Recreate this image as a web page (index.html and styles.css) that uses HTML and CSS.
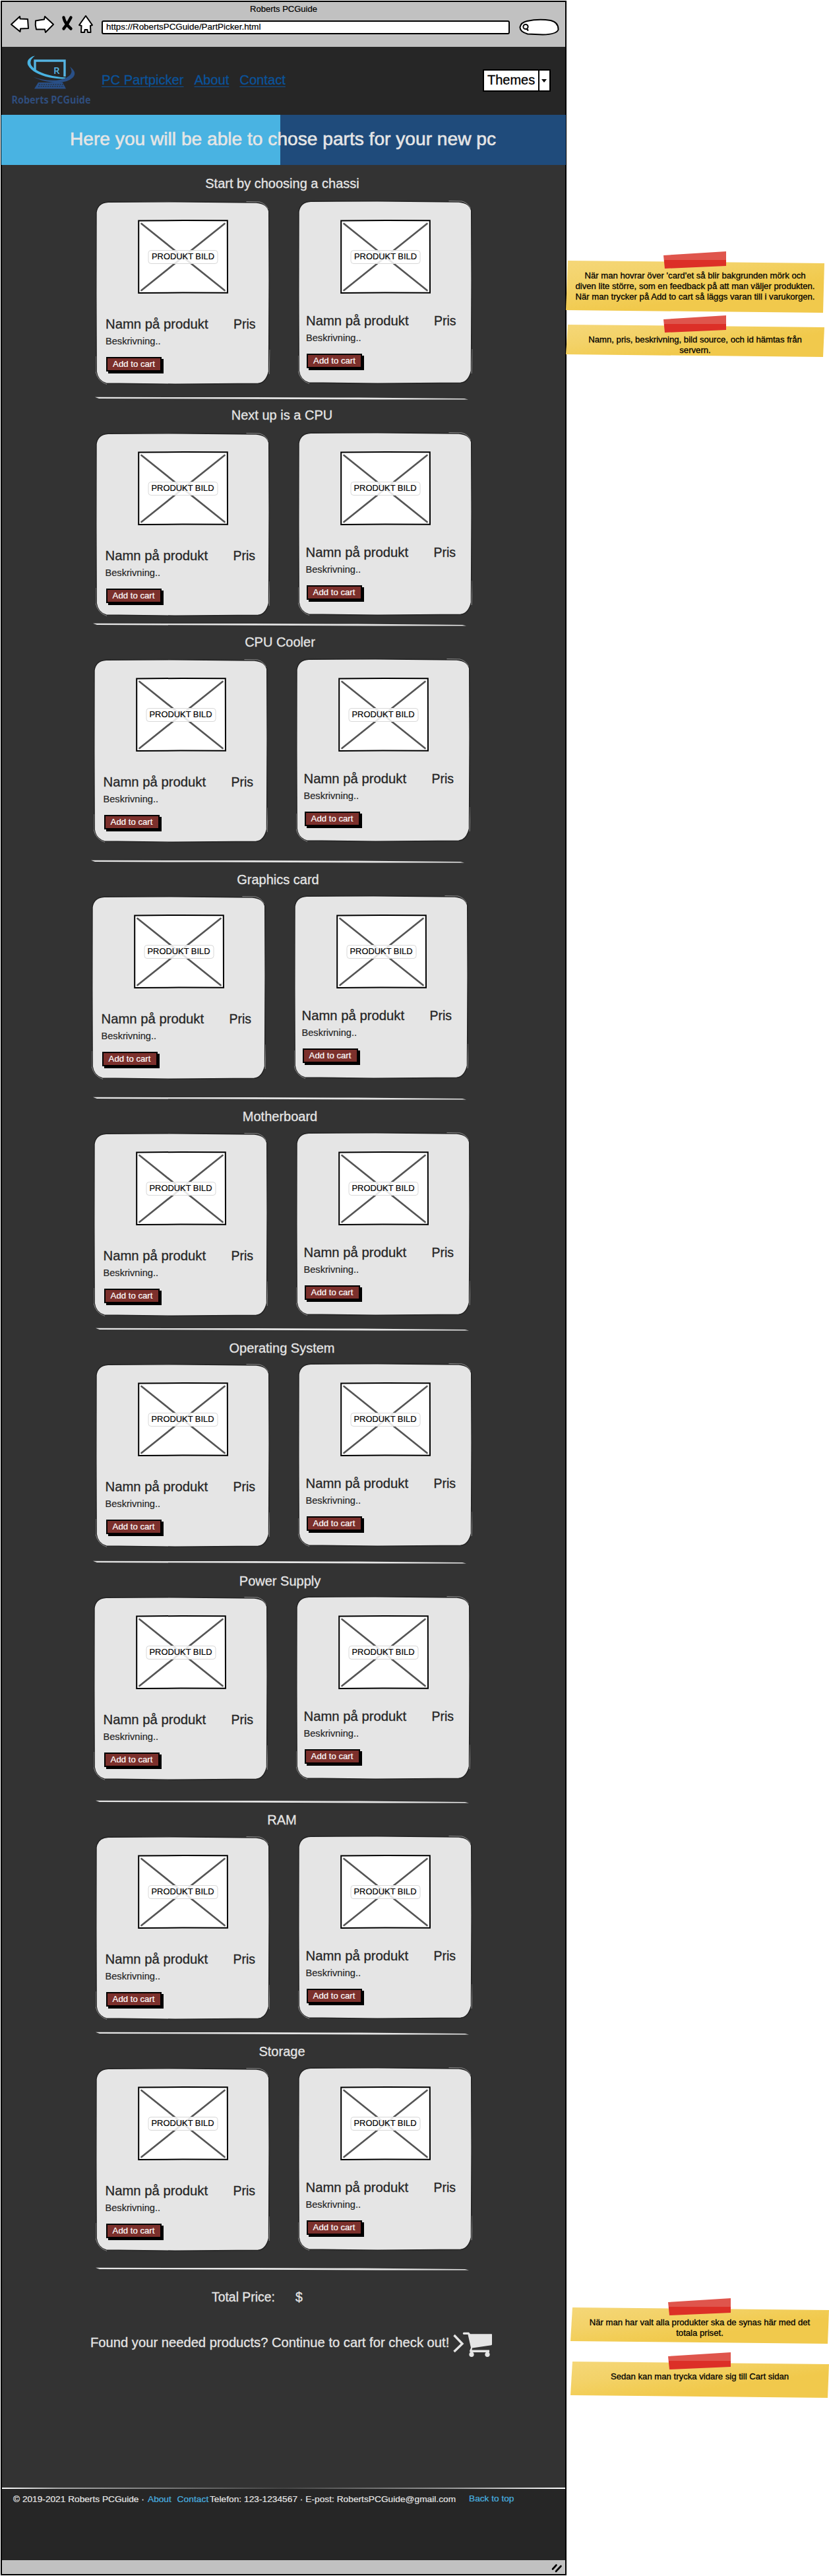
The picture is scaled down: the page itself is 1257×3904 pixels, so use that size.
FILE: index.html
```html
<!DOCTYPE html>
<html lang="sv">
<head>
<meta charset="utf-8">
<title>Roberts PCGuide</title>
<link rel="stylesheet" href="styles.css">
</head>
<body>
<svg class="defs" aria-hidden="true">
  <symbol id="card" viewBox="0 0 264 278" preserveAspectRatio="none">
    <path d="M1 17Q3 2 19 1.2L120 .8L243 2Q259 3 262.2 15L262.6 120L262 258Q258 275 246 276.3L120 277.2L16 276Q3 272 1.2 258L.8 140Z" fill="#e5e5e5" stroke="#222" stroke-width="1.4"/>
    <path d="M228 .6L248 1Q258 4 261 12M0 235V258Q3 273 17 277.4M263.6 225L262.6 262" fill="none" stroke="#b5b5b5" stroke-width=".7"/>
  </symbol>
  <symbol id="photo" viewBox="0 0 137 112">
    <path d="M1.2 1.4L70 1L135.8 1.2L136 110.8L68 110.6L1.2 111Z" fill="#fff" stroke="#000" stroke-width="2"/>
    <path d="M5.5 6L131.5 107M131.5 6L5.5 107" stroke="#555" stroke-width="2.7" stroke-linecap="round"/>
    <rect x="16" y="46.5" width="105" height="20" rx="4" fill="#fff" fill-opacity=".86" stroke="#d8d8d8"/>
  </symbol>
  <symbol id="rule" viewBox="0 0 566 6">
    <path d="M0 .8L240 1L400 1.6L560 3L566 4.6L430 4.4L180 3.6L6 3Z" fill="#e5e5e5"/>
  </symbol>
</svg>
<div class="board">
  <div class="window">
    <div class="chrome">
      <div class="chrome-title">Roberts PCGuide</div>
      <div class="chrome-bar">
        <svg class="chrome-icons" width="128" height="30" viewBox="0 0 128 30" fill="#fff" stroke="#000" stroke-width="2" stroke-linejoin="round">
          <path d="M2 15L15 3L15.5 6.5L27 7L28 21L16 21.500L15.500 26Z"/>
          <path d="M39 9.500Q47 8 52 7.500L53 3L66 15L54 27L53 22.500L40 22.500Q38 16 39 9.500Z"/>
          <path d="M81.500 4.500Q83 13 92.500 21.500M92.500 4.500Q88 14 81.500 21.500" fill="none" stroke-width="4.400" stroke-linecap="round"/>
          <path d="M115 2L125 16L122 17L122.500 27L118 27L117.500 23L113.500 23L113 27L108 27L108.500 17L105 16Z"/>
        </svg>
        <div class="address">https://RobertsPCGuide/PartPicker.html</div>
        <svg class="search" width="61" height="26" viewBox="0 0 61 26" fill="none" stroke="#000">
          <path d="M12 4Q30 0 48 3Q60 6 59.500 17Q57 24 36 24.500L13 23.500Q1 20 1.500 13Q3 6 12 4Z" fill="#fff" stroke-width="2"/>
          <circle cx="10" cy="12.500" r="3.600" stroke-width="2"/>
          <path d="M11.500 15.500L14 18.500" stroke-width="2.200"/>
        </svg>
      </div>
    </div>
    <header class="header">
      <svg class="logo" width="130" height="86" viewBox="0 0 130 86">
        <path d="M40 24V8H85V32" fill="none" stroke="#55b3e0" stroke-width="3.400"/>
        <path d="M40 .5Q26 11 41 21.500Q57 31.500 87 33.500Q86 35.500 80 35.500Q53 34 38 24Q22 12 33 3.500Q36 1 40 .5Z" fill="#49b3e2"/>
        <path d="M93 17Q105 26 97 34Q84 45 58 39.500Q46 37 37 32.500Q57 40 78 37Q102 31 93 17Z" fill="#294f86"/>
        <path d="M45 41H82L87 50.500H39Z" fill="#294f86"/>
        <path d="M46 44H83M45 47H84" stroke="#262626" stroke-width="1" stroke-dasharray="2 1.500"/>
        <text x="68" y="28" class="logo-r">R</text>
        <text x="4.500" y="73" class="logo-name" textLength="120" lengthAdjust="spacingAndGlyphs">Roberts PCGuide</text>
      </svg>
      <nav class="nav"><a href="#">PC Partpicker</a><a href="#">About</a><a href="#">Contact</a></nav>
      <div class="themes"><span>Themes</span><i></i></div>
    </header>
    <h1 class="banner">Here you will be able to chose parts for your new pc</h1>
    <main class="main">
      <section class="part chassi">
        <h2>Start by choosing a chassi</h2>
        <div class="cards">
          <article class="card"><svg class="card-bg"><use href="#card"/></svg><div class="photo"><svg><use href="#photo"/></svg><span>PRODUKT BILD</span></div><div class="name"><b>Namn på produkt</b><b>Pris</b></div><p>Beskrivning..</p><button>Add to cart</button></article>
          <article class="card"><svg class="card-bg"><use href="#card"/></svg><div class="photo"><svg><use href="#photo"/></svg><span>PRODUKT BILD</span></div><div class="name"><b>Namn på produkt</b><b>Pris</b></div><p>Beskrivning..</p><button>Add to cart</button></article>
        </div>
        <svg class="rule"><use href="#rule"/></svg>
      </section>
      <section class="part cpu">
        <h2>Next up is a CPU</h2>
        <div class="cards">
          <article class="card"><svg class="card-bg"><use href="#card"/></svg><div class="photo"><svg><use href="#photo"/></svg><span>PRODUKT BILD</span></div><div class="name"><b>Namn på produkt</b><b>Pris</b></div><p>Beskrivning..</p><button>Add to cart</button></article>
          <article class="card"><svg class="card-bg"><use href="#card"/></svg><div class="photo"><svg><use href="#photo"/></svg><span>PRODUKT BILD</span></div><div class="name"><b>Namn på produkt</b><b>Pris</b></div><p>Beskrivning..</p><button>Add to cart</button></article>
        </div>
        <svg class="rule"><use href="#rule"/></svg>
      </section>
      <section class="part cooler">
        <h2>CPU Cooler</h2>
        <div class="cards">
          <article class="card"><svg class="card-bg"><use href="#card"/></svg><div class="photo"><svg><use href="#photo"/></svg><span>PRODUKT BILD</span></div><div class="name"><b>Namn på produkt</b><b>Pris</b></div><p>Beskrivning..</p><button>Add to cart</button></article>
          <article class="card"><svg class="card-bg"><use href="#card"/></svg><div class="photo"><svg><use href="#photo"/></svg><span>PRODUKT BILD</span></div><div class="name"><b>Namn på produkt</b><b>Pris</b></div><p>Beskrivning..</p><button>Add to cart</button></article>
        </div>
        <svg class="rule"><use href="#rule"/></svg>
      </section>
      <section class="part graphics">
        <h2>Graphics card</h2>
        <div class="cards">
          <article class="card"><svg class="card-bg"><use href="#card"/></svg><div class="photo"><svg><use href="#photo"/></svg><span>PRODUKT BILD</span></div><div class="name"><b>Namn på produkt</b><b>Pris</b></div><p>Beskrivning..</p><button>Add to cart</button></article>
          <article class="card"><svg class="card-bg"><use href="#card"/></svg><div class="photo"><svg><use href="#photo"/></svg><span>PRODUKT BILD</span></div><div class="name"><b>Namn på produkt</b><b>Pris</b></div><p>Beskrivning..</p><button>Add to cart</button></article>
        </div>
        <svg class="rule"><use href="#rule"/></svg>
      </section>
      <section class="part motherboard">
        <h2>Motherboard</h2>
        <div class="cards">
          <article class="card"><svg class="card-bg"><use href="#card"/></svg><div class="photo"><svg><use href="#photo"/></svg><span>PRODUKT BILD</span></div><div class="name"><b>Namn på produkt</b><b>Pris</b></div><p>Beskrivning..</p><button>Add to cart</button></article>
          <article class="card"><svg class="card-bg"><use href="#card"/></svg><div class="photo"><svg><use href="#photo"/></svg><span>PRODUKT BILD</span></div><div class="name"><b>Namn på produkt</b><b>Pris</b></div><p>Beskrivning..</p><button>Add to cart</button></article>
        </div>
        <svg class="rule"><use href="#rule"/></svg>
      </section>
      <section class="part system">
        <h2>Operating System</h2>
        <div class="cards">
          <article class="card"><svg class="card-bg"><use href="#card"/></svg><div class="photo"><svg><use href="#photo"/></svg><span>PRODUKT BILD</span></div><div class="name"><b>Namn på produkt</b><b>Pris</b></div><p>Beskrivning..</p><button>Add to cart</button></article>
          <article class="card"><svg class="card-bg"><use href="#card"/></svg><div class="photo"><svg><use href="#photo"/></svg><span>PRODUKT BILD</span></div><div class="name"><b>Namn på produkt</b><b>Pris</b></div><p>Beskrivning..</p><button>Add to cart</button></article>
        </div>
        <svg class="rule"><use href="#rule"/></svg>
      </section>
      <section class="part power">
        <h2>Power Supply</h2>
        <div class="cards">
          <article class="card"><svg class="card-bg"><use href="#card"/></svg><div class="photo"><svg><use href="#photo"/></svg><span>PRODUKT BILD</span></div><div class="name"><b>Namn på produkt</b><b>Pris</b></div><p>Beskrivning..</p><button>Add to cart</button></article>
          <article class="card"><svg class="card-bg"><use href="#card"/></svg><div class="photo"><svg><use href="#photo"/></svg><span>PRODUKT BILD</span></div><div class="name"><b>Namn på produkt</b><b>Pris</b></div><p>Beskrivning..</p><button>Add to cart</button></article>
        </div>
        <svg class="rule"><use href="#rule"/></svg>
      </section>
      <section class="part ram">
        <h2>RAM</h2>
        <div class="cards">
          <article class="card"><svg class="card-bg"><use href="#card"/></svg><div class="photo"><svg><use href="#photo"/></svg><span>PRODUKT BILD</span></div><div class="name"><b>Namn på produkt</b><b>Pris</b></div><p>Beskrivning..</p><button>Add to cart</button></article>
          <article class="card"><svg class="card-bg"><use href="#card"/></svg><div class="photo"><svg><use href="#photo"/></svg><span>PRODUKT BILD</span></div><div class="name"><b>Namn på produkt</b><b>Pris</b></div><p>Beskrivning..</p><button>Add to cart</button></article>
        </div>
        <svg class="rule"><use href="#rule"/></svg>
      </section>
      <section class="part storage">
        <h2>Storage</h2>
        <div class="cards">
          <article class="card"><svg class="card-bg"><use href="#card"/></svg><div class="photo"><svg><use href="#photo"/></svg><span>PRODUKT BILD</span></div><div class="name"><b>Namn på produkt</b><b>Pris</b></div><p>Beskrivning..</p><button>Add to cart</button></article>
          <article class="card"><svg class="card-bg"><use href="#card"/></svg><div class="photo"><svg><use href="#photo"/></svg><span>PRODUKT BILD</span></div><div class="name"><b>Namn på produkt</b><b>Pris</b></div><p>Beskrivning..</p><button>Add to cart</button></article>
        </div>
        <svg class="rule"><use href="#rule"/></svg>
      </section>
      <div class="total"><span>Total Price:</span><span>$</span></div>
      <div class="checkout">
        <span>Found your needed products? Continue to cart for check out!</span>
        <svg width="62" height="40" viewBox="0 0 62 40">
          <path d="M2.500 5L15 18L2.500 30" fill="none" stroke="#e5e5e5" stroke-width="3.400"/>
          <path d="M17 .8H25L27 3.200H59.500Q60 3.200 60 4V19Q60 20 59 20.300L30 24.500L29.500 27.500H56V31H28Q26 31 26 29L28 24L23.500 4H17Q14.500 2.500 17 .8Z" fill="#e5e5e5"/>
          <ellipse cx="29" cy="34.300" rx="3.600" ry="3.800" fill="#e5e5e5"/><ellipse cx="53" cy="34.300" rx="3.600" ry="3.800" fill="#e5e5e5"/>
        </svg>
      </div>
    </main>
    <footer class="footer">
      <span class="copy">© 2019-2021 Roberts PCGuide ·</span><a class="f-about" href="#">About</a><a class="f-contact" href="#">Contact</a><span class="f-mail">Telefon: 123-1234567 · E-post: RobertsPCGuide@gmail.com</span><a class="f-top" href="#">Back to top</a>
    </footer>
    <div class="status">
      <svg width="20" height="16" viewBox="0 0 20 16" stroke="#000" stroke-width="2.600" stroke-linecap="round"><path d="M3 9.500L8.500 3.500M8 13L15.500 5"/></svg>
    </div>
  </div>
  <aside class="notes">
    <div class="note n1"><div class="paper">När man hovrar över 'card'et så blir bakgrunden mörk och<br>diven lite större, som en feedback på att man väljer produkten.<br>När man trycker på Add to cart så läggs varan till i varukorgen.</div><div class="tape"></div></div>
    <div class="note n2"><div class="paper">Namn, pris, beskrivning, bild source, och id hämtas från<br>servern.</div><div class="tape"></div></div>
    <div class="note n3"><div class="paper">När man har valt alla produkter ska de synas här med det<br>totala priset.</div><div class="tape"></div></div>
    <div class="note n4"><div class="paper">Sedan kan man trycka vidare sig till Cart sidan</div><div class="tape"></div></div>
  </aside>
</div>
</body>
</html>
```
FILE: styles.css
```css
* { box-sizing: border-box; }
body { margin: 0; background: #fff; font-family: "Liberation Sans", Arial, sans-serif; color: #262626; }
h1, h2, p { margin: 0; font-weight: 400; }
svg { display: block; }
.defs { position: absolute; width: 0; height: 0; }

.board { display: flex; align-items: flex-start; width: 1257px; height: 3904px; padding: 1px 0 0 1px; overflow: hidden; }
.window { flex: none; width: 858px; height: 3902px; border: 2px solid #000; background: #333; display: flex; flex-direction: column; }

/* Browser chrome */
.chrome { height: 68px; background: #c1c1c1; color: #000; }
.chrome-title { height: 22px; padding-top: 3px; text-align: center; font-size: 13px; line-height: 15px; -webkit-text-stroke: .2px #000; }
.chrome-bar { display: flex; align-items: flex-start; }
.chrome-icons { margin: -3px 0 0 12px; }
.address { margin: 6px 0 0 11px; width: 619px; height: 21px; border: 2px solid #000; border-radius: 3px; background: #fff; font-size: 13.35px; line-height: 16px; padding-left: 5px; -webkit-text-stroke: .2px #000; }
.search { margin: 3px 0 0 14px; }

/* Site header */
.header { height: 103px; background: #262626; display: flex; align-items: flex-start; }
.logo { margin: 13px 0 0 10px; overflow: visible; }
.logo-r { font: 600 15px "Open Sans", "Noto Sans", sans-serif; fill: #55b3e0; }
.logo-name { font: 700 15.500px "Open Sans", "Noto Sans", sans-serif; fill: #2f4d7d; }
.nav { display: flex; gap: 16px; margin: 38px 0 0 11px; font-size: 20.200px; line-height: 24px; }
.nav a { color: #0b539b; text-decoration: underline; text-underline-offset: 3px; text-decoration-thickness: 1px; -webkit-text-stroke: .3px #0b539b; }
.themes { margin: 34px 22px 0 auto; width: 103px; height: 34px; border: 2px solid #000; background: #fff; color: #000; display: flex; font-size: 20px; line-height: 28px; -webkit-text-stroke: .3px #000; }
.themes span { width: 84px; padding-left: 5px; border-right: 2px solid #000; }
.themes i { margin: 13px 0 0 3px; width: 8px; height: 5px; background: #000; clip-path: polygon(0 0, 100% 0, 50% 100%); }

.banner { margin: 0 -1px 0 -1px; height: 76px; background: linear-gradient(90deg, #49b3e2 423px, #1f4b7b 423px); color: #e5e5e5; font-size: 28.150px; line-height: 73px; padding-left: 104px; white-space: nowrap; -webkit-text-stroke: .6px #e5e5e5; }

/* Product sections; each one sets its own offsets */
.main { height: 3520px; }
.part { width: 570px; margin-left: calc(var(--left) - 3px); padding-top: var(--lead); }
.part h2 { width: 564px; text-align: center; font-size: 20px; line-height: 24px; color: #e5e5e5; margin-bottom: var(--gap); -webkit-text-stroke: .3px #e5e5e5; }
.cards { display: flex; gap: 45px; height: 276px; margin-bottom: var(--tail); }
.rule { width: 566px; height: 6px; margin-left: var(--rule); }
.chassi { --left: 146px; --lead: 16px; --gap: 16px; --tail: 19px; --rule: -2px; }
.cpu { --left: 145.5px; --lead: 10px; --gap: 16px; --tail: 11px; --rule: -5px; }
.cooler { --left: 142.5px; --lead: 11px; --gap: 15px; --tail: 27px; --rule: -5px; }
.graphics { --left: 139.5px; --lead: 12px; --gap: 14px; --tail: 27px; --rule: 1px; }
.motherboard { --left: 142.5px; --lead: 12px; --gap: 14px; --tail: 18px; --rule: 2px; }
.system { --left: 145.5px; --lead: 13px; --gap: 13px; --tail: 21px; --rule: -5px; }
.power { --left: 142.5px; --lead: 13px; --gap: 13px; --tail: 31px; --rule: 2px; }
.ram { --left: 145.5px; --lead: 12px; --gap: 14px; --tail: 19px; --rule: -1px; }
.storage { --left: 145.5px; --lead: 12px; --gap: 14px; --tail: 25px; --rule: -1px; }

.card { position: relative; width: 262px; height: 276px; padding: 27px 0 0 14px; }
.card-bg { position: absolute; left: -1px; top: -1px; width: 264.500px; height: 278px; z-index: 0; }
.card > :not(.card-bg) { position: relative; }
.photo { display: grid; place-items: center; width: 137px; height: 112px; margin-left: 49px; }
.photo svg, .photo span { grid-area: 1 / 1; }
.photo svg { width: 137px; height: 112px; }
.photo span { font-size: 12.900px; line-height: 16px; padding-bottom: 1px; color: #000; white-space: nowrap; -webkit-text-stroke: .2px #000; }
.name { display: flex; margin-top: 34px; font-size: 20.300px; line-height: 24px; }
.name b { font-weight: 400; width: 194px; white-space: nowrap; flex: none; -webkit-text-stroke: .3px #262626; }
.name b + b { width: 40px; font-size: 19.500px; }
.card p { margin: 5px 0 0 0; font-size: 14.600px; line-height: 18px; -webkit-text-stroke: .2px #262626; }
.card button { display: block; margin: 15px 0 0 1px; width: 84px; height: 22px; padding: 0; border: 2px solid #000; background: #7c302c; box-shadow: 3px 3px #000; color: #fff; font: 13.200px/18px "Liberation Sans", Arial, sans-serif; white-space: nowrap; -webkit-text-stroke: .2px #fff; }
.card + .card { margin-top: -1px; padding: 28px 0 0 11px; }
.card + .card .photo { margin-left: 52px; }
.card + .card .name { margin-top: 29px; }

.total { display: flex; margin: 27px 0 0 318px; font-size: 19.400px; line-height: 24px; color: #e5e5e5; -webkit-text-stroke: .3px #e5e5e5; }
.total span:first-child { width: 127px; }
.checkout { display: flex; margin: 41px 0 0 134px; font-size: 20.200px; line-height: 24px; color: #e5e5e5; }
.checkout span { flex: none; width: 549px; padding-top: 4px; white-space: nowrap; -webkit-text-stroke: .3px #e5e5e5; }

.footer { height: 110px; background: #262626; border-top: 2px solid; border-image: linear-gradient(90deg, #fff, #aaa 10%, #444 50%, #999 80%, #fff) 1; display: flex; padding: 7px 0 0 17px; font-size: 13.700px; line-height: 18px; color: #e5e5e5; white-space: nowrap; -webkit-text-stroke: .2px; }
.footer a { color: #49b3e2; text-decoration: none; }
.copy { width: 204px; }
.footer .f-about { width: 44.500px; }
.footer .f-contact { width: 49.500px; letter-spacing: .1px; }
.f-mail { width: 393px; letter-spacing: .03px; }
.f-top { margin-top: -1px; }
.status { flex: 1; background: #c1c1c1; display: flex; justify-content: flex-end; padding: 4px 2px 0 0; }

/* Sticky notes beside the window */
.notes { width: 398px; padding-top: 380px; }
.note { position: relative; width: 392px; padding-top: 14px; margin-left: -1px; }
.paper { height: 100%; padding-top: 15px; text-align: center; font-size: 13.150px; line-height: 15.800px; color: #000; white-space: nowrap; -webkit-text-stroke: .3px #000; background: linear-gradient(172deg, #f5d778 0, #f3d268 30%, #f2cd56 50%, #f1c94c 65%, #f1c94c); clip-path: polygon(3px 0, 100% 4px, calc(100% - 2px) 100%, 0 calc(100% - 4px)); }
.tape { position: absolute; left: 148px; top: 0; width: 95px; height: 26px; background: linear-gradient(#df554c 13px, #dc2f27 13px); clip-path: polygon(0 6px, 100% 0, 100% 22px, 2px 100%); }
.n1 { height: 93px; }
.n2 { height: 63px; margin-top: 4px; }
.n3 { height: 69px; margin: 2942px 0 0 6px; }
.n4 { height: 69px; margin: 13px 0 0 6px; }
```
